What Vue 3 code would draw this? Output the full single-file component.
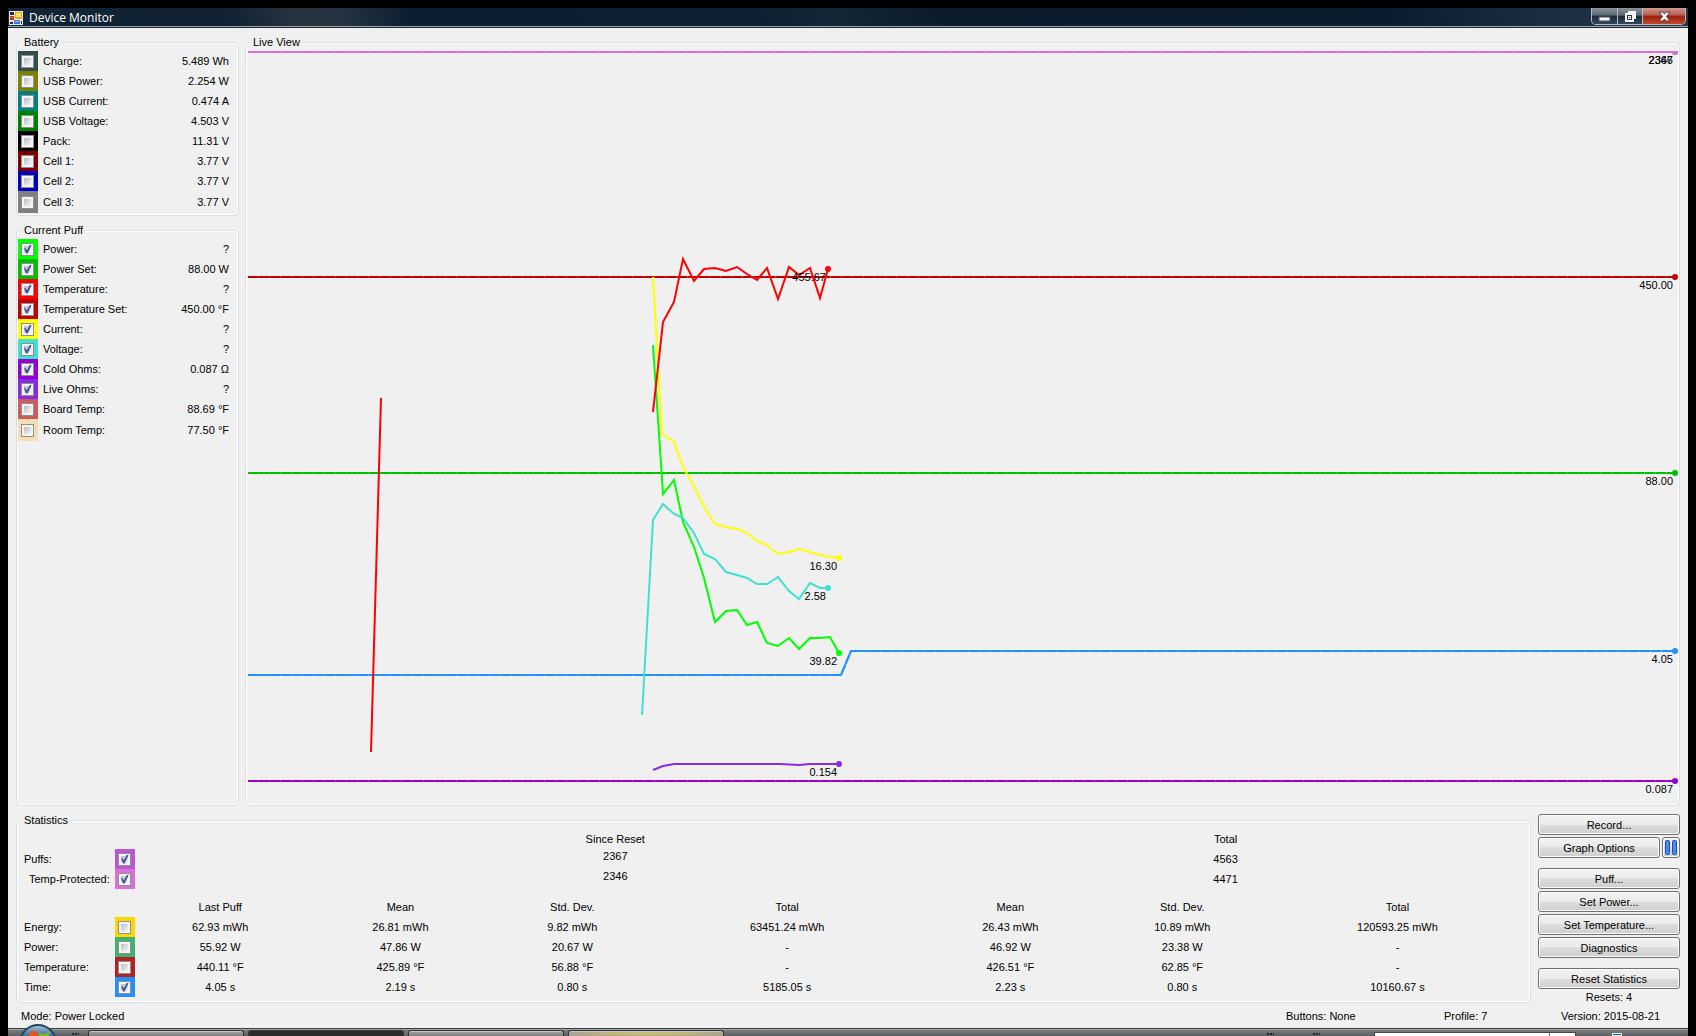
<script setup>
import { ref, reactive } from 'vue'

const battery = reactive([
  { id: 'charge', label: 'Charge:', value: '5.489 Wh', color: '#2f4f4f', on: false },
  { id: 'usb-power', label: 'USB Power:', value: '2.254 W', color: '#808000', on: false },
  { id: 'usb-current', label: 'USB Current:', value: '0.474 A', color: '#008080', on: false },
  { id: 'usb-voltage', label: 'USB Voltage:', value: '4.503 V', color: '#008000', on: false },
  { id: 'pack', label: 'Pack:', value: '11.31 V', color: '#000000', on: false },
  { id: 'cell-1', label: 'Cell 1:', value: '3.77 V', color: '#800000', on: false },
  { id: 'cell-2', label: 'Cell 2:', value: '3.77 V', color: '#0000c0', on: false },
  { id: 'cell-3', label: 'Cell 3:', value: '3.77 V', color: '#808080', on: false }
])

const puff = reactive([
  { id: 'power', label: 'Power:', value: '?', color: '#00ff00', on: true },
  { id: 'power-set', label: 'Power Set:', value: '88.00 W', color: '#00c000', on: true },
  { id: 'temp', label: 'Temperature:', value: '?', color: '#ff0000', on: true },
  { id: 'temp-set', label: 'Temperature Set:', value: '450.00 °F', color: '#c00000', on: true },
  { id: 'current', label: 'Current:', value: '?', color: '#ffff00', on: true },
  { id: 'voltage', label: 'Voltage:', value: '?', color: '#40e0d0', on: true },
  { id: 'cold-ohms', label: 'Cold Ohms:', value: '0.087 Ω', color: '#9400d3', on: true },
  { id: 'live-ohms', label: 'Live Ohms:', value: '?', color: '#8a2be2', on: true },
  { id: 'board-temp', label: 'Board Temp:', value: '88.69 °F', color: '#cd5c5c', on: false },
  { id: 'room-temp', label: 'Room Temp:', value: '77.50 °F', color: '#f5deb3', on: false }
])

const groups = [
  { title: 'Battery', rows: battery },
  { title: 'Current Puff', rows: puff }
]

const counts = reactive([
  { id: 'puffs', label: 'Puffs:', color: '#ba55d3', on: true, reset: '2367', total: '4563' },
  { id: 'protected', label: 'Temp-Protected:', color: '#da70d6', on: true, reset: '2346', total: '4471', sub: true }
])

const stats = reactive([
  { id: 's-energy', label: 'Energy:', color: '#ffd700', on: false, cells: ['62.93 mWh', '26.81 mWh', '9.82 mWh', '63451.24 mWh', '26.43 mWh', '10.89 mWh', '120593.25 mWh'] },
  { id: 's-power', label: 'Power:', color: '#3cb371', on: false, cells: ['55.92 W', '47.86 W', '20.67 W', '-', '46.92 W', '23.38 W', '-'] },
  { id: 's-temp', label: 'Temperature:', color: '#b22222', on: false, cells: ['440.11 °F', '425.89 °F', '56.88 °F', '-', '426.51 °F', '62.85 °F', '-'] },
  { id: 's-time', label: 'Time:', color: '#1e90ff', on: true, cells: ['4.05 s', '2.19 s', '0.80 s', '5185.05 s', '2.23 s', '0.80 s', '10160.67 s'] }
])

const statHeads = ['Last Puff', 'Mean', 'Std. Dev.', 'Total', 'Mean', 'Std. Dev.', 'Total']

const steady = [
  { color: '#da70d6', points: '248,52 1678,52' },
  { color: '#c00000', points: '248,277 1675,277' },
  { color: '#00c000', points: '248,473 1675,473' },
  { color: '#1e90ff', points: '248,675 841,675 851,651 1675,651' },
  { color: '#9400d3', points: '248,781 1675,781' }
]

const traces = [
  { color: '#ffff00', points: '653,277 662,434 674,442 683,467 694,486 704,507 715,524 726,527 737,529 747,533 757,541 767,545 778,554 789,552 799,549 810,552 820,555 830,557 839,558' },
  { color: '#00ff00', points: '653,345 663,494 674,480 683,522 694,547 704,578 715,622 726,611 737,610 747,625 757,622 767,643 778,646 789,638 799,649 810,638 820,638 830,637 839,653' },
  { color: '#40e0d0', points: '642,715 653,520 663,504 674,514 683,518 694,533 704,554 715,559 726,572 737,575 747,578 757,584 767,584 778,577 789,591 799,599 810,583 820,588 828,588' },
  { color: '#ff0000', points: '371,752 381,398' },
  { color: '#ff0000', points: '653,412 663,322 674,302 683,259 694,281 704,269 715,268 726,271 737,267 747,274 757,280 767,268 778,299 789,267 799,275 810,268 820,298 828,269' },
  { color: '#8a2be2', points: '653,770 663,766 674,764 693,764 704,764 715,764 780,764 799,765 810,764 839,764' }
]

const marks = [
  { x: 1675, y: 52, color: '#da70d6', text: '2367' },
  { x: 1675, y: 52, color: '#da70d6', text: '2346' },
  { x: 1675, y: 277, color: '#c00000', text: '450.00' },
  { x: 1675, y: 473, color: '#00c000', text: '88.00' },
  { x: 1675, y: 651, color: '#1e90ff', text: '4.05' },
  { x: 1675, y: 781, color: '#9400d3', text: '0.087' },
  { x: 828, y: 269, color: '#ff0000', text: '455.67' },
  { x: 839, y: 558, color: '#ffff00', text: '16.30' },
  { x: 828, y: 588, color: '#40e0d0', text: '2.58' },
  { x: 839, y: 653, color: '#00ff00', text: '39.82' },
  { x: 839, y: 764, color: '#8a2be2', text: '0.154' }
]

const paused = ref(false)
</script>

<template>
  <div class="desktop">
    <main class="window">
      <header class="titlebar">
        <svg class="app-icon" width="14" height="14" viewBox="0 0 14 14">
          <rect width="14" height="14" fill="#e8e8e4" />
          <rect x="1" y="1" width="4" height="3" fill="#20303c" />
          <rect x="1" y="5" width="4" height="4" fill="#c8281c" />
          <rect x="2" y="6" width="2" height="1" fill="#f08070" />
          <rect x="6" y="1" width="7" height="7" fill="#e8a818" />
          <rect x="7" y="2" width="5" height="4" fill="#ffe06a" />
          <rect x="1" y="11" width="3" height="2" fill="#20303c" />
          <rect x="5" y="9" width="6" height="4" fill="#3a7ad8" />
          <rect x="6" y="10" width="4" height="1" fill="#9cc4f8" />
          <rect x="12" y="10" width="1" height="3" fill="#20303c" />
        </svg>
        <h1>Device Monitor</h1>
        <div class="caption-buttons">
          <button class="min" aria-label="Minimize">
            <svg width="13" height="13" viewBox="0 0 13 13"><rect x="1" y="7" width="11" height="4" fill="#f4f4f4" stroke="#4a5560" /></svg>
          </button>
          <button class="max" aria-label="Restore">
            <svg width="13" height="13" viewBox="0 0 13 13">
              <path d="M4 2h7v7" fill="none" stroke="#f4f4f4" stroke-width="2" />
              <rect x="2" y="4" width="7" height="7" fill="#2a3846" stroke="#f4f4f4" stroke-width="2" />
              <rect x="4" y="6" width="3" height="3" fill="#f4f4f4" />
              <rect x="5" y="7" width="1" height="1" fill="#2a3846" />
            </svg>
          </button>
          <button class="close" aria-label="Close">
            <svg width="13" height="13" viewBox="0 0 13 13">
              <path d="M1 2h4l1.500 2L8 2h4L8.500 6.500 12 11H8L6.500 9 5 11H1l3.500-4.500z" fill="#f4f4f4" stroke="#5a3a44" />
            </svg>
          </button>
        </div>
      </header>

      <div class="upper">
        <div class="readings">
          <fieldset v-for="group in groups" :key="group.title">
            <legend>{{ group.title }}</legend>
            <div v-for="row in group.rows" :key="row.id" class="reading">
              <span class="swatch" :style="{ backgroundColor: row.color }">
                <input :id="row.id" v-model="row.on" type="checkbox">
              </span>
              <label :for="row.id">{{ row.label }}</label>
              <span class="value">{{ row.value }}</span>
            </div>
          </fieldset>
        </div>

        <fieldset class="live">
          <legend>Live View</legend>
          <svg class="chart" viewBox="248 51 1431 754">
            <g fill="none" stroke-width="2">
              <template v-for="line in steady" :key="line.color">
                <polyline :points="line.points" :stroke="line.color" opacity="0.75" />
                <polyline :points="line.points" :stroke="line.color" stroke-dasharray="10 1" />
              </template>
              <polyline v-for="line in traces" :key="line.points" :points="line.points" :stroke="line.color" />
            </g>
            <g v-for="mark in marks" :key="mark.text">
              <circle :cx="mark.x" :cy="mark.y" r="3" :fill="mark.color" />
              <text :x="mark.x - 2" :y="mark.y + 12">{{ mark.text }}</text>
            </g>
          </svg>
        </fieldset>
      </div>

      <div class="lower">
        <fieldset class="statistics">
          <legend>Statistics</legend>
          <table>
            <colgroup>
              <col class="c-label"><col class="c-swatch">
              <col class="c-last"><col class="c-mean"><col class="c-dev"><col class="c-total">
              <col class="c-last"><col class="c-dev2"><col>
            </colgroup>
            <tbody>
              <tr>
                <td colspan="3"></td>
                <th colspan="3" scope="colgroup">Since Reset</th>
                <th colspan="3" scope="colgroup">Total</th>
              </tr>
              <tr v-for="row in counts" :key="row.id">
                <th scope="row" :class="{ sub: row.sub }"><label :for="row.id">{{ row.label }}</label></th>
                <td>
                  <span class="swatch" :style="{ backgroundColor: row.color }">
                    <input :id="row.id" v-model="row.on" type="checkbox">
                  </span>
                </td>
                <td></td>
                <td colspan="3" class="count">{{ row.reset }}</td>
                <td colspan="3">{{ row.total }}</td>
              </tr>
              <tr class="heads">
                <td colspan="2"></td>
                <th v-for="(head, i) in statHeads" :key="i" scope="col">{{ head }}</th>
              </tr>
              <tr v-for="row in stats" :key="row.id">
                <th scope="row"><label :for="row.id">{{ row.label }}</label></th>
                <td>
                  <span class="swatch" :style="{ backgroundColor: row.color }">
                    <input :id="row.id" v-model="row.on" type="checkbox">
                  </span>
                </td>
                <td v-for="(cell, i) in row.cells" :key="i">{{ cell }}</td>
              </tr>
            </tbody>
          </table>
        </fieldset>

        <div class="actions">
          <button>Record...</button>
          <div class="pair">
            <button>Graph Options</button>
            <button class="pause" aria-label="Pause" :aria-pressed="paused" @click="paused = !paused">
              <svg width="12" height="15" viewBox="0 0 12 15">
                <rect x="0.500" y="0.500" width="4" height="14" rx="1" fill="#4a8af0" stroke="#1c4fb4" />
                <rect x="7.500" y="0.500" width="4" height="14" rx="1" fill="#4a8af0" stroke="#1c4fb4" />
              </svg>
            </button>
          </div>
          <button class="first">Puff...</button>
          <button>Set Power...</button>
          <button>Set Temperature...</button>
          <button>Diagnostics</button>
          <button class="first">Reset Statistics</button>
          <p>Resets: 4</p>
        </div>
      </div>

      <footer class="status">
        <span>Mode: Power Locked</span>
        <span>Buttons: None</span>
        <span>Profile: 7</span>
        <span>Version: 2015-08-21</span>
      </footer>
    </main>

    <div class="taskbar">
      <svg class="orb" width="38" height="12" viewBox="0 0 38 12">
        <defs>
          <linearGradient id="orb-fill" x1="0" y1="0" x2="0" y2="1">
            <stop offset="0" stop-color="#a9c4d8" />
            <stop offset="0.300" stop-color="#3f6f94" />
            <stop offset="1" stop-color="#173a58" />
          </linearGradient>
        </defs>
        <circle cx="19" cy="19" r="18" fill="url(#orb-fill)" stroke="#24455c" stroke-width="2" />
        <path d="M9 12c2-5 6-6 10-4l-1 6z" fill="#e8541c" />
        <path d="M20 9c3 2 7 1 11-1l-2 6H19z" fill="#7cb82c" />
      </svg>
      <span class="grip left"></span>
      <span class="task"></span>
      <span class="task active"></span>
      <span class="task"></span>
      <span class="task alert"></span>
      <span class="spacer"></span>
      <span class="grip mid"></span>
      <span class="grip end"></span>
      <span class="address"><i></i></span>
      <span class="tray"></span>
    </div>
  </div>
</template>

<style>
body {
  margin: 0;
  background: #000;
}
</style>

<style scoped>
.desktop {
  min-height: 100vh;
  box-sizing: border-box;
  padding: 8px 8px 0;
  overflow: hidden;
  background: #000;
  color: #000;
  font: 11px/14px "Liberation Sans", Arial, sans-serif;
}

.window {
  background: #f0f0f0;
}

/* title bar */
.titlebar {
  display: flex;
  height: 20px;
  box-sizing: border-box;
  padding: 0 2px 0 1px;
  border-bottom: 1px solid #1c2630;
  box-shadow: inset 0 -1px #9aa4aa;
  background: linear-gradient(75deg, #122638 0%, #0f2133 13%, #25333f 17%, #243340 20%, #0b1f33 24%, #0c2034 44%, #132737 49%, #0a1c2c 56%, #0a1d30 82%, #1d3145 93%, #22364a 100%);
}

.app-icon {
  margin-top: 3px;
}

h1 {
  flex: 1;
  margin: 0 0 0 6px;
  color: #fff;
  font: 400 12px/19px "Open Sans", sans-serif;
}

.caption-buttons {
  display: flex;
  height: 17px;
  box-sizing: border-box;
  border: 1px solid #b4bcc2;
  border-top: 0;
  border-radius: 0 0 5px 5px;
  overflow: hidden;
}

.caption-buttons button {
  display: flex;
  align-items: center;
  justify-content: center;
  padding: 0;
  border: 0;
  background: linear-gradient(#8a949c, #5a6670 45%, #1c2a38 50%, #33475a);
}

.caption-buttons .min {
  width: 25px;
}

.caption-buttons .max {
  width: 25px;
  border-left: 1px solid #b4bcc2;
}

.caption-buttons .close {
  width: 43px;
  border-left: 1px solid #b4bcc2;
  background: linear-gradient(#d09a90, #b85a4c 45%, #98200c 50%, #c8452c);
}

/* group boxes */
fieldset {
  min-width: 0;
  margin: 0;
  padding: 2px 1px;
  border: 1px solid #d5dfe5;
  border-radius: 4px;
  box-shadow: inset 0 0 0 1px #fff;
}

legend {
  margin-left: 4px;
  padding: 0 2px;
  background: #f0f0f0;
}

.upper {
  display: flex;
  gap: 6px;
  padding: 7px 8px;
}

.readings {
  display: flex;
  flex: none;
  flex-direction: column;
  gap: 7px;
  width: 223px;
}

.readings fieldset:last-child {
  flex: 1;
}

.reading {
  display: flex;
  align-items: center;
  height: 20px;
  padding-right: 8px;
}

.reading:last-child {
  height: 22px;
}

.reading label {
  flex: 1;
  margin-left: 5px;
}

.swatch {
  display: flex;
  align-items: center;
  width: 20px;
  height: 100%;
  box-sizing: border-box;
  padding-left: 3px;
}

input[type="checkbox"] {
  position: relative;
  width: 13px;
  height: 13px;
  margin: 0;
  appearance: none;
  border: 1px solid #8e8f8f;
  background: linear-gradient(135deg, #b9bdc4, #f4f4f4) content-box, #f4f4f4;
  padding: 2px;
  box-sizing: border-box;
}

input[type="checkbox"]:checked::after {
  content: "";
  position: absolute;
  inset: 1px;
  background: #43589c;
  clip-path: polygon(10% 42%, 28% 42%, 42% 64%, 78% 0, 98% 0, 52% 100%, 34% 100%);
}

.live {
  flex: 1;
  padding: 2px 0 0 2px;
}

.live legend {
  margin-left: 3px;
}

.chart {
  display: block;
  width: 100%;
}

.chart text {
  text-anchor: end;
}

/* statistics */
.lower {
  display: flex;
  align-items: flex-start;
  gap: 7px;
  padding: 0 8px;
}

.statistics {
  flex: 1;
  padding: 2px 4px 5px 1px;
}

table {
  width: 100%;
  table-layout: fixed;
  border-collapse: collapse;
}

.c-label { width: 97px; }
.c-swatch { width: 20px; }
.c-last { width: 11.3%; }
.c-mean { width: 12.6%; }
.c-dev { width: 10.2%; }
.c-total { width: 18.3%; }
.c-dev2 { width: 11.5%; }

tr {
  height: 20px;
}

th,
td {
  height: 20px;
  padding: 0;
  font-weight: normal;
  text-align: center;
}

th[scope="row"] {
  padding-left: 6px;
  text-align: left;
}

th.sub {
  padding-left: 11px;
}

td .swatch {
  height: 20px;
}

.count {
  vertical-align: top;
}

.heads td,
.heads th {
  height: 28px;
  box-sizing: border-box;
  padding-top: 8px;
}

/* action column */
.actions {
  display: flex;
  flex: none;
  flex-direction: column;
  gap: 2px;
  width: 142px;
  padding-top: 1px;
}

.actions button {
  height: 21px;
  padding: 0;
  border: 1px solid #707070;
  border-radius: 3px;
  box-shadow: inset 0 0 0 1px #fcfcfc;
  background: linear-gradient(#f2f2f2, #ebebeb 50%, #dddddd 50%, #cfcfcf);
  color: #000;
  font: inherit;
}

.actions .first {
  margin-top: 8px;
}

.pair {
  display: flex;
  gap: 2px;
}

.pair button {
  flex: 1;
}

.pair .pause {
  display: flex;
  flex: none;
  align-items: center;
  justify-content: center;
  width: 18px;
}

.actions p {
  margin: 0;
  line-height: 12px;
  text-align: center;
}

.status {
  display: grid;
  grid-template-columns: 1fr 158px 117px 127px;
  align-items: center;
  height: 25px;
  padding-left: 13px;
}

/* taskbar */
.taskbar {
  position: relative;
  display: flex;
  height: 8px;
  box-sizing: border-box;
  padding-left: 80px;
  border-top: 1px solid #3c4042;
  box-shadow: inset 0 1px #a0a4a6;
  background: linear-gradient(#7c8082, #5c6062);
}

.orb {
  position: absolute;
  left: 11px;
  top: -5px;
}

.task {
  flex: none;
  width: 156px;
  height: 6px;
  box-sizing: border-box;
  margin: 1px 4px 0 0;
  border: 1px solid #34383a;
  border-bottom: 0;
  border-radius: 3px 3px 0 0;
  box-shadow: inset 0 1px #c0c2c2;
  background: linear-gradient(#a4a6a6, #7c7e7e);
}

.task.active {
  box-shadow: none;
  background: #2c2e2e;
}

.task.alert {
  background: radial-gradient(ellipse at 50% 50%, #d8c070, #a8a48c 80%);
}

.spacer {
  flex: 1;
}

.grip {
  width: 7px;
  height: 2px;
  margin-top: 4px;
  background: repeating-linear-gradient(90deg, #26292a 0 2px, transparent 2px 3px);
}

.grip.left {
  position: absolute;
  left: 64px;
}

.grip.mid {
  margin-right: 39px;
}

.grip.end {
  margin-right: 54px;
}

.address {
  display: flex;
  width: 202px;
  margin-top: 3px;
  border: 1px solid #44484a;
  border-bottom: 0;
  box-sizing: border-box;
  background: #fff;
}

.address i {
  margin-left: 174px;
  border-left: 1px solid #70767a;
}

.tray {
  width: 10px;
  height: 3px;
  box-sizing: border-box;
  margin: 4px 66px 0 36px;
  border: 1px solid #f0f0f0;
  background: #1c5a80;
}
</style>
